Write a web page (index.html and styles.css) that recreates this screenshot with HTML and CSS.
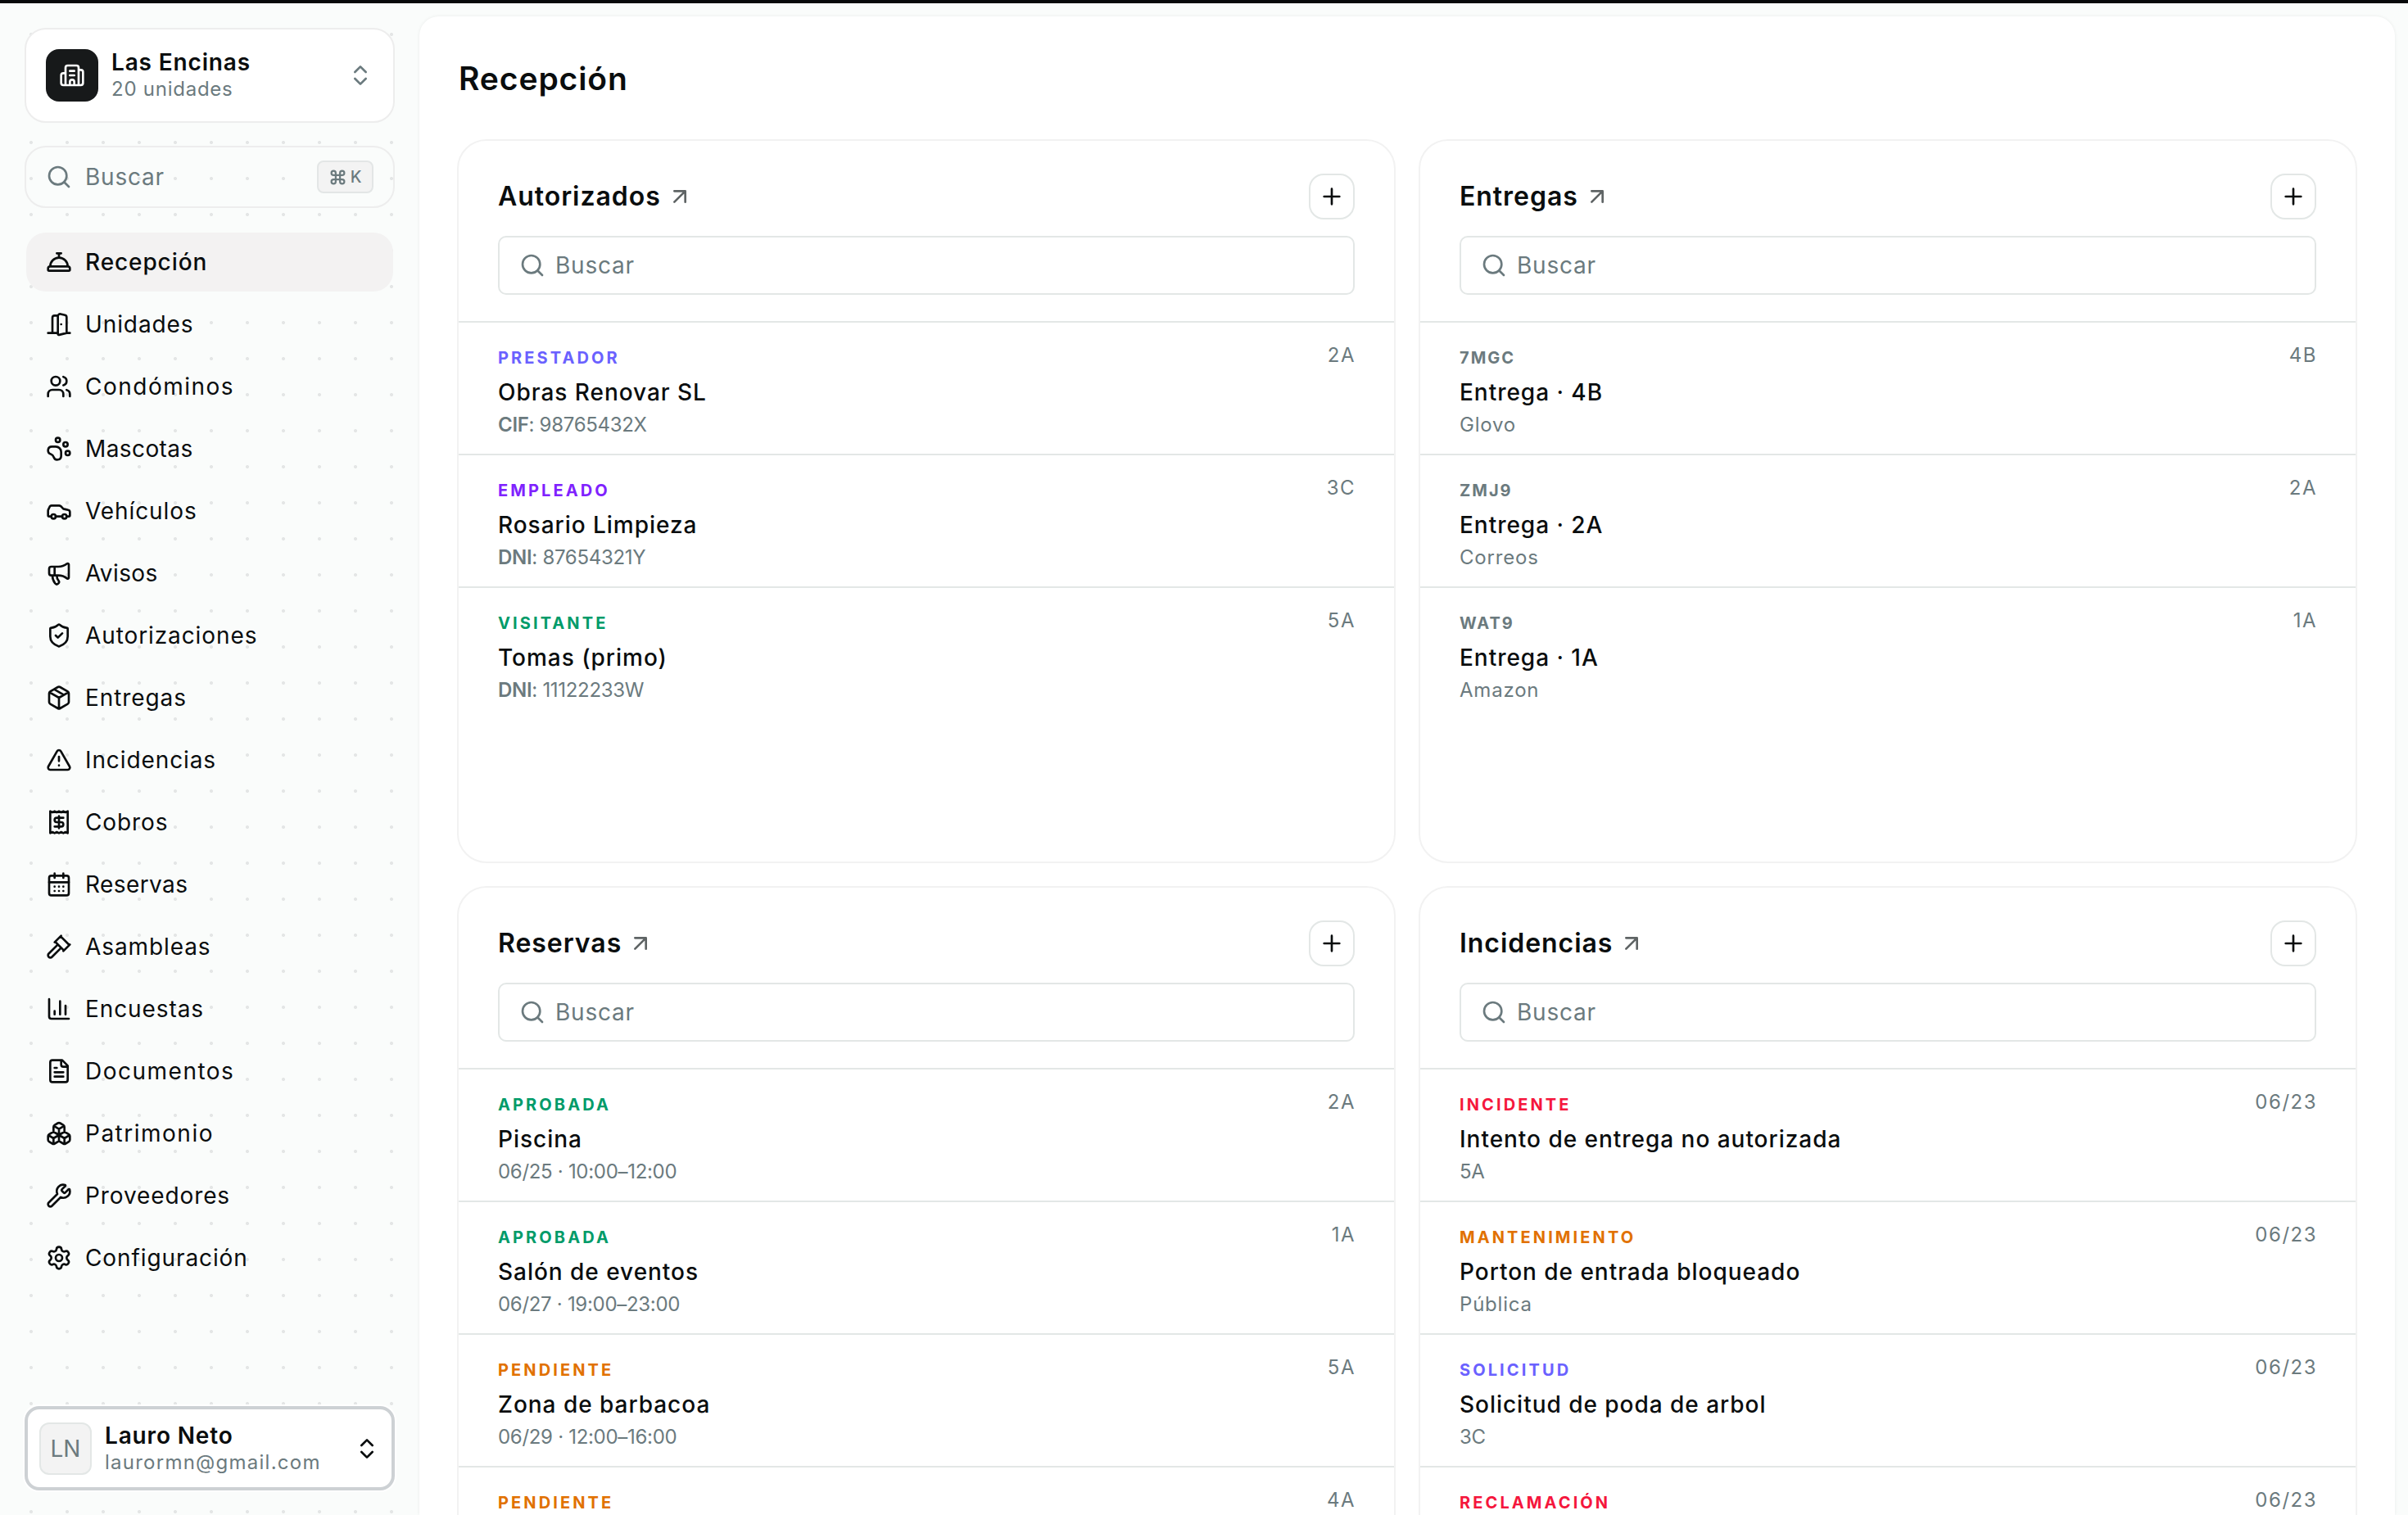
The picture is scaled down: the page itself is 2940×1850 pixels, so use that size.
FILE: index.html
```
<!DOCTYPE html>
<html lang="es">
<head>
    <meta charset="UTF-8">
    <meta name="viewport" content="width=device-width, initial-scale=1.0">
    <title>Recepción</title>
    <link rel="stylesheet" href="styles.css">
</head>
<body>
    <!-- Iconos -->
    <svg class="sprite" xmlns="http://www.w3.org/2000/svg">
        <symbol id="i-building" viewBox="0 0 24 24"><path d="M10 12h4M10 8h4M14 21v-3a2 2 0 0 0-4 0v3M6 10H4a2 2 0 0 0-2 2v7a2 2 0 0 0 2 2h16a2 2 0 0 0 2-2V9a2 2 0 0 0-2-2h-2M6 21V5a2 2 0 0 1 2-2h8a2 2 0 0 1 2 2v16"/></symbol>
        <symbol id="i-chevrons" viewBox="0 0 24 24"><path d="m7 15 5 5 5-5M7 9l5-5 5 5"/></symbol>
        <symbol id="i-search" viewBox="0 0 24 24"><circle cx="11" cy="11" r="8"/><path d="m21 21-4.34-4.34"/></symbol>
        <symbol id="i-command" viewBox="0 0 24 24"><path d="M15 6v12a3 3 0 1 0 3-3H6a3 3 0 1 0 3 3V6a3 3 0 1 0-3 3h12a3 3 0 1 0-3-3"/></symbol>
        <symbol id="i-plus" viewBox="0 0 24 24"><path d="M5 12h14M12 5v14"/></symbol>
        <symbol id="i-arrow" viewBox="0 0 24 24"><path d="M7 7h10v10M7 17 17 7"/></symbol>
        <symbol id="i-bell" viewBox="0 0 24 24"><path d="M3 20a1 1 0 0 1-1-1v-1a2 2 0 0 1 2-2h16a2 2 0 0 1 2 2v1a1 1 0 0 1-1 1ZM20 16a8 8 0 1 0-16 0M12 4v4M10 4h4"/></symbol>
        <symbol id="i-door" viewBox="0 0 24 24"><path d="M11 20H2M11 4.562v16.157a1 1 0 0 0 1.242.97L19 20V5.562a2 2 0 0 0-1.515-1.94l-4-1A2 2 0 0 0 11 4.561zM11 4H8a2 2 0 0 0-2 2v14M14 12h.01M22 20h-3"/></symbol>
        <symbol id="i-users" viewBox="0 0 24 24"><path d="M16 21v-2a4 4 0 0 0-4-4H6a4 4 0 0 0-4 4v2M16 3.128a4 4 0 0 1 0 7.744M22 21v-2a4 4 0 0 0-3-3.87"/><circle cx="9" cy="7" r="4"/></symbol>
        <symbol id="i-paw" viewBox="0 0 24 24"><circle cx="11" cy="4" r="2"/><circle cx="18" cy="8" r="2"/><circle cx="20" cy="16" r="2"/><path d="M9 10a5 5 0 0 1 5 5v3.5a3.5 3.5 0 0 1-6.84 1.045Q6.52 17.48 4.46 16.84A3.5 3.5 0 0 1 5.5 10Z"/></symbol>
        <symbol id="i-car" viewBox="0 0 24 24"><path d="M19 17h2c.6 0 1-.4 1-1v-3c0-.9-.7-1.7-1.5-1.9C18.7 10.6 16 10 16 10s-1.3-1.4-2.2-2.3c-.5-.4-1.1-.7-1.8-.7H5c-.6 0-1.1.4-1.4.9l-1.4 2.9A3.7 3.7 0 0 0 2 12v4c0 .6.4 1 1 1h2M9 17h6"/><circle cx="7" cy="17" r="2"/><circle cx="17" cy="17" r="2"/></symbol>
        <symbol id="i-megaphone" viewBox="0 0 24 24"><path d="M11 6a13 13 0 0 0 8.4-2.8A1 1 0 0 1 21 4v12a1 1 0 0 1-1.6.8A13 13 0 0 0 11 14H5a2 2 0 0 1-2-2V8a2 2 0 0 1 2-2zM6 14a12 12 0 0 0 2.4 7.2 2 2 0 0 0 3.2-2.4A8 8 0 0 1 10 14M8 6v8"/></symbol>
        <symbol id="i-shield" viewBox="0 0 24 24"><path d="M20 13c0 5-3.5 7.5-7.66 8.95a1 1 0 0 1-.67-.01C7.5 20.5 4 18 4 13V6a1 1 0 0 1 1-1c2 0 4.5-1.2 6.24-2.72a1.17 1.17 0 0 1 1.52 0C14.51 3.81 17 5 19 5a1 1 0 0 1 1 1zM9 12l2 2 4-4"/></symbol>
        <symbol id="i-package" viewBox="0 0 24 24"><path d="M11 21.73a2 2 0 0 0 2 0l7-4A2 2 0 0 0 21 16V8a2 2 0 0 0-1-1.73l-7-4a2 2 0 0 0-2 0l-7 4A2 2 0 0 0 3 8v8a2 2 0 0 0 1 1.73zM12 22V12M3.29 7 12 12l8.71-5M7.5 4.27l9 5.15"/></symbol>
        <symbol id="i-alert" viewBox="0 0 24 24"><path d="m21.73 18-8-14a2 2 0 0 0-3.48 0l-8 14A2 2 0 0 0 4 21h16a2 2 0 0 0 1.73-3M12 9v4M12 17h.01"/></symbol>
        <symbol id="i-receipt" viewBox="0 0 24 24"><path d="M4 2v20l2-1 2 1 2-1 2 1 2-1 2 1 2-1 2 1V2l-2 1-2-1-2 1-2-1-2 1-2-1-2 1ZM16 8h-6a2 2 0 1 0 0 4h4a2 2 0 1 1 0 4H8M12 17.5v-11"/></symbol>
        <symbol id="i-calendar" viewBox="0 0 24 24"><rect x="3" y="4" width="18" height="18" rx="2"/><path d="M8 2v4M16 2v4M3 10h18M8 14h.01M12 14h.01M16 14h.01M8 18h.01M12 18h.01M16 18h.01"/></symbol>
        <symbol id="i-gavel" viewBox="0 0 24 24"><path d="m14 13-8.381 8.38a1 1 0 0 1-3.001-3l8.384-8.381M16 16l6-6M21.5 10.5l-8-8M8 8l6-6M8.5 7.5l8 8"/></symbol>
        <symbol id="i-chart" viewBox="0 0 24 24"><path d="M3 3v16a2 2 0 0 0 2 2h16M18 17V9M13 17V5M8 17v-3"/></symbol>
        <symbol id="i-file" viewBox="0 0 24 24"><path d="M15 2H6a2 2 0 0 0-2 2v16a2 2 0 0 0 2 2h12a2 2 0 0 0 2-2V7ZM14 2v4a2 2 0 0 0 2 2h4M10 9H8M16 13H8M16 17H8"/></symbol>
        <symbol id="i-boxes" viewBox="0 0 24 24"><path d="M2.97 12.92A2 2 0 0 0 2 14.63v3.24a2 2 0 0 0 .97 1.71l3 1.8a2 2 0 0 0 2.06 0L12 19v-5.5l-5-3-4.03 2.42ZM7 16.5l-4.74-2.85M7 16.5l5-3M7 16.5v5.17M12 13.5V19l3.97 2.38a2 2 0 0 0 2.06 0l3-1.8a2 2 0 0 0 .97-1.71v-3.24a2 2 0 0 0-.97-1.71L17 10.5l-5 3ZM17 16.5l-5-3M17 16.5l4.74-2.85M17 16.5v5.17M7.97 4.42A2 2 0 0 0 7 6.13v4.37l5 3 5-3V6.13a2 2 0 0 0-.97-1.71l-3-1.8a2 2 0 0 0-2.06 0l-3 1.8ZM12 8 7.26 5.15M12 8l4.74-2.85M12 13.5V8"/></symbol>
        <symbol id="i-wrench" viewBox="0 0 24 24"><path d="M14.7 6.3a1 1 0 0 0 0 1.4l1.6 1.6a1 1 0 0 0 1.4 0l3.106-3.105c.32-.322.863-.22.983.218a6 6 0 0 1-8.259 7.057l-7.91 7.91a1 1 0 0 1-2.999-3l7.91-7.91a6 6 0 0 1 7.057-8.259c.438.12.54.662.219.984z"/></symbol>
        <symbol id="i-settings" viewBox="0 0 24 24"><path d="M9.671 4.136a2.34 2.34 0 0 1 4.659 0 2.34 2.34 0 0 0 3.319 1.915 2.34 2.34 0 0 1 2.33 4.033 2.34 2.34 0 0 0 0 3.831 2.34 2.34 0 0 1-2.33 4.033 2.34 2.34 0 0 0-3.319 1.915 2.34 2.34 0 0 1-4.659 0 2.34 2.34 0 0 0-3.32-1.915 2.34 2.34 0 0 1-2.33-4.033 2.34 2.34 0 0 0 0-3.831A2.34 2.34 0 0 1 6.35 6.051a2.34 2.34 0 0 0 3.319-1.915"/><circle cx="12" cy="12" r="3"/></symbol>
    </svg>

    <aside class="sidebar">
        <button class="switcher">
            <span class="logo"><svg class="icon"><use href="#i-building"/></svg></span>
            <span class="who">
                <span class="who-name">Las Encinas</span>
                <span class="who-sub">20 unidades</span>
            </span>
            <svg class="icon muted"><use href="#i-chevrons"/></svg>
        </button>

        <div class="quick-search">
            <svg class="icon"><use href="#i-search"/></svg>
            <span>Buscar</span>
            <kbd><svg class="icon"><use href="#i-command"/></svg>K</kbd>
        </div>

        <nav class="nav">
            <a class="active"><svg class="icon"><use href="#i-bell"/></svg><span>Recepción</span></a>
            <a><svg class="icon"><use href="#i-door"/></svg><span>Unidades</span></a>
            <a class="wide"><svg class="icon"><use href="#i-users"/></svg><span>Condóminos</span></a>
            <a class="tight"><svg class="icon"><use href="#i-paw"/></svg><span>Mascotas</span></a>
            <a><svg class="icon"><use href="#i-car"/></svg><span>Vehículos</span></a>
            <a class="tight"><svg class="icon"><use href="#i-megaphone"/></svg><span>Avisos</span></a>
            <a><svg class="icon"><use href="#i-shield"/></svg><span>Autorizaciones</span></a>
            <a><svg class="icon"><use href="#i-package"/></svg><span>Entregas</span></a>
            <a><svg class="icon"><use href="#i-alert"/></svg><span>Incidencias</span></a>
            <a><svg class="icon"><use href="#i-receipt"/></svg><span>Cobros</span></a>
            <a class="tight"><svg class="icon"><use href="#i-calendar"/></svg><span>Reservas</span></a>
            <a><svg class="icon"><use href="#i-gavel"/></svg><span>Asambleas</span></a>
            <a><svg class="icon"><use href="#i-chart"/></svg><span>Encuestas</span></a>
            <a class="wide"><svg class="icon"><use href="#i-file"/></svg><span>Documentos</span></a>
            <a class="wide"><svg class="icon"><use href="#i-boxes"/></svg><span>Patrimonio</span></a>
            <a><svg class="icon"><use href="#i-wrench"/></svg><span>Proveedores</span></a>
            <a><svg class="icon"><use href="#i-settings"/></svg><span>Configuración</span></a>
        </nav>

        <button class="user">
            <span class="avatar">LN</span>
            <span class="who">
                <span class="who-name">Lauro Neto</span>
                <span class="who-sub">laurormn@gmail.com</span>
            </span>
            <svg class="icon"><use href="#i-chevrons"/></svg>
        </button>
    </aside>

    <main class="panel">
        <h1>Recepción</h1>

        <div class="grid">
            <section class="card">
                <header>
                    <h2>Autorizados</h2>
                    <svg class="icon arrow"><use href="#i-arrow"/></svg>
                    <button class="add"><svg class="icon"><use href="#i-plus"/></svg></button>
                </header>
                <div class="search"><svg class="icon"><use href="#i-search"/></svg><span>Buscar</span></div>
                <div class="row">
                    <span class="tag indigo">PRESTADOR</span><span class="side">2A</span>
                    <p class="title">Obras Renovar SL</p>
                    <p class="sub num"><b>CIF</b>: 98765432X</p>
                </div>
                <div class="row">
                    <span class="tag violet">EMPLEADO</span><span class="side">3C</span>
                    <p class="title">Rosario Limpieza</p>
                    <p class="sub num"><b>DNI</b>: 87654321Y</p>
                </div>
                <div class="row">
                    <span class="tag green">VISITANTE</span><span class="side">5A</span>
                    <p class="title">Tomas (primo)</p>
                    <p class="sub num"><b>DNI</b>: 11122233W</p>
                </div>
            </section>

            <section class="card">
                <header>
                    <h2>Entregas</h2>
                    <svg class="icon arrow"><use href="#i-arrow"/></svg>
                    <button class="add"><svg class="icon"><use href="#i-plus"/></svg></button>
                </header>
                <div class="search"><svg class="icon"><use href="#i-search"/></svg><span>Buscar</span></div>
                <div class="row">
                    <span class="tag code">7MGC</span><span class="side">4B</span>
                    <p class="title">Entrega · 4B</p>
                    <p class="sub">Glovo</p>
                </div>
                <div class="row">
                    <span class="tag code">ZMJ9</span><span class="side">2A</span>
                    <p class="title">Entrega · 2A</p>
                    <p class="sub">Correos</p>
                </div>
                <div class="row">
                    <span class="tag code">WAT9</span><span class="side">1A</span>
                    <p class="title">Entrega · 1A</p>
                    <p class="sub">Amazon</p>
                </div>
            </section>

            <section class="card">
                <header>
                    <h2>Reservas</h2>
                    <svg class="icon arrow"><use href="#i-arrow"/></svg>
                    <button class="add"><svg class="icon"><use href="#i-plus"/></svg></button>
                </header>
                <div class="search"><svg class="icon"><use href="#i-search"/></svg><span>Buscar</span></div>
                <div class="row">
                    <span class="tag green">APROBADA</span><span class="side">2A</span>
                    <p class="title">Piscina</p>
                    <p class="sub num">06/25 · 10:00–12:00</p>
                </div>
                <div class="row">
                    <span class="tag green">APROBADA</span><span class="side">1A</span>
                    <p class="title">Salón de eventos</p>
                    <p class="sub num">06/27 · 19:00–23:00</p>
                </div>
                <div class="row">
                    <span class="tag amber">PENDIENTE</span><span class="side">5A</span>
                    <p class="title">Zona de barbacoa</p>
                    <p class="sub num">06/29 · 12:00–16:00</p>
                </div>
                <div class="row">
                    <span class="tag amber">PENDIENTE</span><span class="side">4A</span>
                </div>
            </section>

            <section class="card">
                <header>
                    <h2>Incidencias</h2>
                    <svg class="icon arrow"><use href="#i-arrow"/></svg>
                    <button class="add"><svg class="icon"><use href="#i-plus"/></svg></button>
                </header>
                <div class="search"><svg class="icon"><use href="#i-search"/></svg><span>Buscar</span></div>
                <div class="row">
                    <span class="tag red">INCIDENTE</span><span class="side">06/23</span>
                    <p class="title">Intento de entrega no autorizada</p>
                    <p class="sub num">5A</p>
                </div>
                <div class="row">
                    <span class="tag amber">MANTENIMIENTO</span><span class="side">06/23</span>
                    <p class="title">Porton de entrada bloqueado</p>
                    <p class="sub">Pública</p>
                </div>
                <div class="row">
                    <span class="tag indigo">SOLICITUD</span><span class="side">06/23</span>
                    <p class="title">Solicitud de poda de arbol</p>
                    <p class="sub num">3C</p>
                </div>
                <div class="row">
                    <span class="tag red">RECLAMACIÓN</span><span class="side">06/23</span>
                </div>
            </section>
        </div>
    </main>
</body>
</html>
```

FILE: styles.css
```
* {
    box-sizing: border-box;
}

body {
    margin: 0;
    height: 100vh;
    overflow: hidden;
    display: flex;
    border-top: 4px solid #07090a;
    background-color: #fafcfb;
    color: #0a0d0e;
    font-family: Inter, "Open Sans", sans-serif;
    font-size: 28px;
    line-height: 36px;
}

h1, h2, p {
    margin: 0;
}

button {
    font: inherit;
    color: inherit;
    text-align: left;
}

.sprite {
    display: none;
}

.icon {
    width: 32px;
    height: 32px;
    flex: none;
    fill: none;
    stroke: currentColor;
    stroke-width: 2;
    stroke-linecap: round;
    stroke-linejoin: round;
}

.muted {
    color: #6b7a7e;
}

/* Barra lateral */
.sidebar {
    width: 484px;
    margin: 16px 12px 0 16px;
    padding: 14px 18px 30px 14px;
    display: flex;
    flex-direction: column;
    background-image: radial-gradient(circle, #e4e6e6 1.6px, transparent 2.4px);
    background-size: 44px 44px;
}

.switcher {
    height: 116px;
    padding: 0 24px;
    display: flex;
    align-items: center;
    gap: 16px;
    background: #fff;
    border: 2px solid #ededed;
    border-radius: 26px;
}

.logo {
    width: 64px;
    height: 64px;
    display: flex;
    align-items: center;
    justify-content: center;
    background: #17191a;
    color: #fff;
    border-radius: 16px;
}

.who {
    flex: 1;
    display: flex;
    flex-direction: column;
}

.who-name {
    font-weight: 600;
    line-height: 34px;
    letter-spacing: 0.85px;
}

.who-sub {
    color: #6b7a7e;
    font-size: 24px;
    line-height: 32px;
    letter-spacing: 0.75px;
}

.user .who-sub {
    letter-spacing: 1.25px;
}

.quick-search {
    height: 76px;
    margin-top: 28px;
    padding: 0 24px;
    display: flex;
    align-items: center;
    gap: 16px;
    color: #6b7a7e;
    border: 2px solid #ededed;
    border-radius: 26px;
    letter-spacing: 0.75px;
}

.quick-search kbd {
    width: 69px;
    height: 40px;
    margin-left: auto;
    display: flex;
    align-items: center;
    justify-content: center;
    gap: 5px;
    background: #f3f3f3;
    border: 2px solid #e3e6e6;
    border-radius: 8px;
    font-family: inherit;
    font-size: 20px;
    font-weight: 500;
    letter-spacing: 0;
}

.quick-search kbd .icon {
    width: 21px;
    height: 21px;
    stroke-width: 2.5;
}

.nav {
    margin: 30px 2px 0;
    display: flex;
    flex-direction: column;
    gap: 4px;
}

.nav a {
    height: 72px;
    padding: 0 24px;
    display: flex;
    align-items: center;
    gap: 16px;
    border-radius: 24px;
    letter-spacing: 0.9px;
}

.nav .wide {
    letter-spacing: 1.5px;
}

.nav .tight {
    letter-spacing: 0.4px;
}

.nav .active {
    background: #f3f2f2;
    font-weight: 500;
}

.user {
    height: 103px;
    margin-top: auto;
    padding: 0 14px;
    display: flex;
    align-items: center;
    gap: 16px;
    background: #fff;
    border: 4px solid #cdd1d4;
    border-radius: 18px;
    box-shadow: 0 0 0 2px #fff;
}

.avatar {
    width: 64px;
    height: 64px;
    display: flex;
    align-items: center;
    justify-content: center;
    background: #f3f3f3;
    border: 2px solid #e3e7e6;
    border-radius: 12px;
    color: #6b7a7e;
}

/* Panel principal */
.panel {
    width: 2412px;
    margin-top: 16px;
    padding: 0 46px;
    flex: none;
    overflow: hidden;
    background: #fff;
    border-radius: 24px 24px 0 0;
    box-shadow: 0 0 4px rgba(0, 0, 0, 0.07);
}

h1 {
    height: 150px;
    padding-top: 50px;
    padding-left: 2px;
    font-size: 39px;
    line-height: 52px;
    font-weight: 600;
    letter-spacing: 0.9px;
}

.grid {
    display: grid;
    grid-template-columns: 1fr 1fr;
    grid-auto-rows: 884px;
    gap: 28px;
}

.card {
    border: 2px solid #f2f2f2;
    border-radius: 36px;
    overflow: hidden;
}

.card header {
    height: 96px;
    margin: 0 48px;
    padding-top: 40px;
    display: flex;
    align-items: center;
    gap: 7px;
}

h2 {
    font-size: 32px;
    line-height: 40px;
    font-weight: 600;
    letter-spacing: 0.95px;
}

.arrow {
    color: #5f6465;
}

.add {
    width: 56px;
    height: 56px;
    margin-left: auto;
    padding: 0;
    display: flex;
    align-items: center;
    justify-content: center;
    background: #fff;
    border: 2px solid #e3e7e6;
    border-radius: 18px;
}

.search {
    height: 72px;
    margin: 20px 48px 32px;
    padding: 0 24px;
    display: flex;
    align-items: center;
    gap: 12px;
    border: 2px solid #e3e7e6;
    border-radius: 10px;
    color: #6b7a7e;
    letter-spacing: 0.75px;
}

.row {
    height: 162px;
    padding: 22px 48px 0;
    display: grid;
    grid-template-columns: 1fr auto;
    grid-template-rows: 36px 54px 25px;
    align-items: center;
    border-top: 2px solid #e3e7e6;
}

.row p {
    grid-column: 1 / -1;
}

.tag {
    padding-top: 5px;
    font-size: 20px;
    font-weight: 700;
    letter-spacing: 3.1px;
}

.side {
    color: #6b7a7e;
    font-size: 24px;
    letter-spacing: 1.5px;
    margin-right: -1px;
}

.title {
    font-weight: 500;
    letter-spacing: 0.97px;
}

.sub {
    color: #6b7a7e;
    font-size: 24px;
    letter-spacing: 0.8px;
}

.sub.num {
    letter-spacing: -0.3px;
}

.sub b {
    font-weight: 600;
}

.indigo { color: #6a61ff; }
.violet { color: #7f22fe; }
.green { color: #009b69; }
.amber { color: #e17100; }
.red { color: #f5173d; }

.code {
    color: #6b7a7e;
    letter-spacing: 2px;
}
```
